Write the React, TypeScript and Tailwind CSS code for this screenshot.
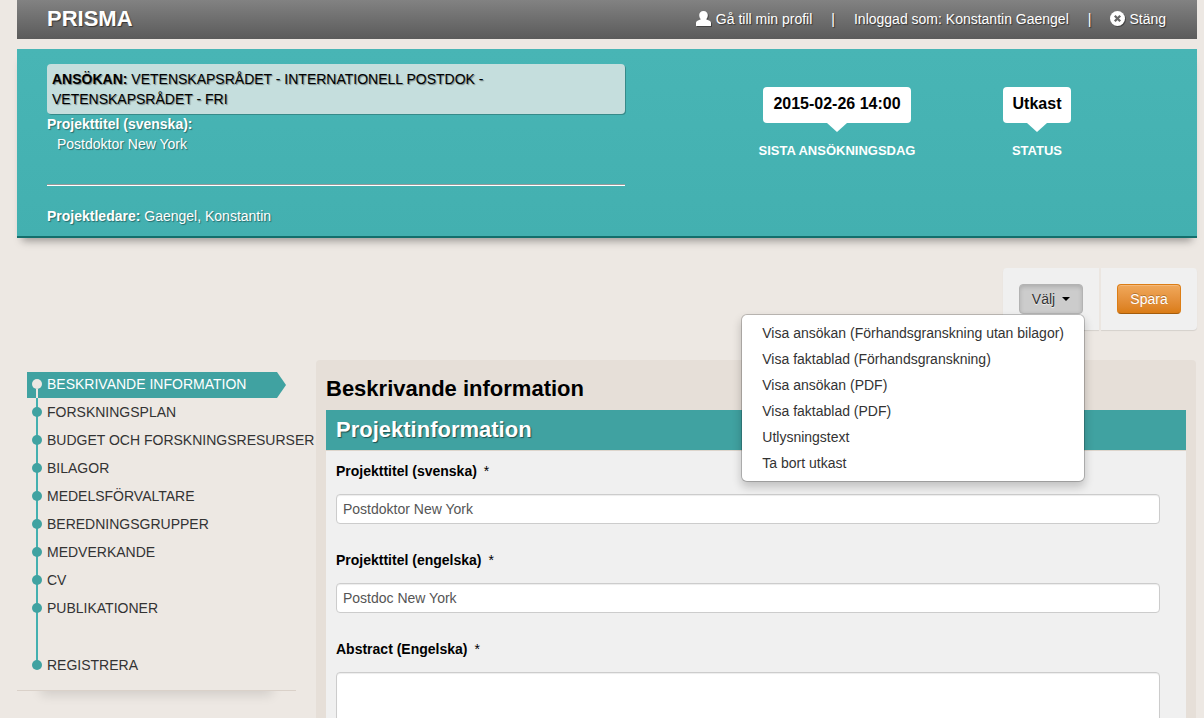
import React, { useState } from "react";

const steps = [
  "Forskningsplan",
  "Budget och forskningsresurser",
  "Bilagor",
  "Medelsförvaltare",
  "Beredningsgrupper",
  "Medverkande",
  "CV",
  "Publikationer",
];

const actions = [
  "Visa ansökan (Förhandsgranskning utan bilagor)",
  "Visa faktablad (Förhandsgranskning)",
  "Visa ansökan (PDF)",
  "Visa faktablad (PDF)",
  "Utlysningstext",
  "Ta bort utkast",
];

function UserIcon() {
  return (
    <svg viewBox="0 0 16 15" className="h-[15px] w-4 drop-shadow-[1px_1px_0_rgba(0,0,0,0.35)]" fill="#fff" aria-hidden="true">
      <path d="M7.500 0C4.900 0 3.200 1.700 3.200 4c0 1.900.7 3.400 1.700 4.300L2 9.600C.7 10.100 0 11 0 12.200V14.500q0 .5.500.5h14q.5 0 .5-.5v-2.300c0-1.200-.7-2.100-2-2.600l-2.900-1.300c1-.9 1.700-2.400 1.700-4.300 0-2.300-1.700-4-4.300-4z" />
    </svg>
  );
}

function CloseIcon() {
  return (
    <svg viewBox="0 0 15 15" className="size-[15px] drop-shadow-[1px_1px_0_rgba(0,0,0,0.35)]" aria-hidden="true">
      <circle cx="7.500" cy="7.500" r="7.500" fill="#fff" />
      <path d="M4.800 4.800l5.400 5.400M10.200 4.800l-5.400 5.400" stroke="#666" strokeWidth="2.300" />
    </svg>
  );
}

function TopBar() {
  return (
    <header className="flex h-[39px] items-center justify-between bg-linear-to-b from-[#828282] to-[#5b5b5b] pr-[31px] pl-[30px] text-white text-shadow-[1px_1px_1px_rgba(0,0,0,0.5)]">
      <h1 className="pb-[2px] text-[22px] leading-7 font-bold">PRISMA</h1>
      <nav className="flex items-center gap-[19px] pb-[2px]" aria-label="Konto">
        <a href="#profil" className="flex items-center gap-1">
          <UserIcon />
          Gå till min profil
        </a>
        <span>|</span>
        <span>Inloggad som: Konstantin Gaengel</span>
        <span>|</span>
        <a href="#stang" className="flex items-center gap-1">
          <CloseIcon />
          Stäng
        </a>
      </nav>
    </header>
  );
}

function Bubble({ value, label }: { value: string; label: string }) {
  return (
    <div className="flex w-[200px] flex-col items-center">
      <strong className="rounded-[4px] bg-white px-[10px] pt-[7px] pb-[9px] text-[16px] leading-5 text-black">
        {value}
      </strong>
      <svg viewBox="0 0 20 9" className="h-[9px] w-5" fill="#fff" aria-hidden="true">
        <path d="M0 0h20L10 9z" />
      </svg>
      <span className="mt-[9px] text-[13px] leading-5 font-bold whitespace-nowrap text-white uppercase">
        {label}
      </span>
    </div>
  );
}

function Summary() {
  return (
    <section className="mt-[10px] flex justify-between border-b-2 border-[#136f6c] bg-linear-to-b from-[#48b5b5] to-[#43b0b0] pt-[15px] pr-[60px] pb-[10px] pl-[30px] shadow-[0_8px_8px_-5px_rgba(0,0,0,0.35)]">
      <div className="w-[53%] text-white text-shadow-[1px_1px_1px_rgba(0,0,0,0.4)]">
        <p className="rounded-[4px] bg-[#c5dedd] p-[5px] text-black uppercase shadow-[1px_1px_0_#378a89]">
          <b>Ansökan:</b> Vetenskapsrådet - Internationell postdok -<br />
          Vetenskapsrådet - FRI
        </p>
        <p className="font-bold">Projekttitel (svenska):</p>
        <p className="pl-[10px]">Postdoktor New York</p>
        <hr className="mt-[30px] mb-5 border-t border-b border-t-[#999] border-b-white" />
        <p>
          <b>Projektledare:</b> Gaengel, Konstantin
        </p>
      </div>
      <div className="flex pt-[23px]">
        <Bubble value="2015-02-26 14:00" label="Sista ansökningsdag" />
        <Bubble value="Utkast" label="Status" />
      </div>
    </section>
  );
}

function Toolbar() {
  const [open, setOpen] = useState(true);
  return (
    <div className="mt-[30px] flex justify-end gap-[2px]">
      <div className="rounded-l-[4px] bg-[#f0f0f0] p-4 shadow-[0_1px_1px_rgba(0,0,0,0.1)]">
        <div className="relative">
          <button
            type="button"
            aria-expanded={open}
            onClick={() => setOpen(!open)}
            className="flex h-[30px] w-16 items-center justify-center gap-[7px] rounded-[4px] border border-[#b3b3b3] bg-[#cccccc] text-[#333] inset-shadow-[0_2px_4px_rgba(0,0,0,0.15)] text-shadow-[0_1px_1px_rgba(255,255,255,0.75)]"
          >
            Välj
            <svg viewBox="0 0 8 4" className="h-1 w-2" fill="#000" aria-hidden="true">
              <path d="M0 0h8L4 4z" />
            </svg>
          </button>
          {open && (
            <ul className="absolute top-full right-[-2px] z-10 rounded-[6px] border border-black/20 bg-white bg-clip-padding py-[5px] shadow-[0_5px_10px_rgba(0,0,0,0.2)]">
              {actions.map((a) => (
                <li key={a}>
                  <a href="#atgard" className="block px-5 py-[3px] whitespace-nowrap text-[#333]">
                    {a}
                  </a>
                </li>
              ))}
            </ul>
          )}
        </div>
      </div>
      <div className="rounded-r-[4px] bg-[#f0f0f0] p-4 shadow-[0_1px_1px_rgba(0,0,0,0.1)]">
        <button
          type="button"
          className="block h-[30px] w-16 rounded-[4px] border border-[#dc7d15] border-b-[#a45c0c] bg-linear-to-b from-[#f0a85a] to-[#da7c14] text-white inset-shadow-[0_1px_0_rgba(255,255,255,0.2)] text-shadow-[0_-1px_0_rgba(0,0,0,0.25)]"
        >
          Spara
        </button>
      </div>
    </div>
  );
}

function Step({ label, last = false }: { label: string; last?: boolean }) {
  return (
    <li className={last ? "mt-[29px] flex h-7 items-center" : "flex h-7 items-center"}>
      <span className="mx-[5px] size-[10px] shrink-0 rounded-full bg-[#40a2a1]" />
      <a href="#steg" className="whitespace-nowrap text-[#333] uppercase">
        {label}
      </a>
    </li>
  );
}

function Sidebar() {
  return (
    <nav className="w-[279px] shrink-0 pt-3" aria-label="Ansökans delar">
      <div className="relative pl-[10px]">
        <div className="absolute top-3 bottom-3 left-[19px] w-[2px] bg-[#43b0b0]" />
        <ul className="relative">
          <li className="mr-[10px] flex h-[26px] items-stretch">
            <a
              href="#steg"
              aria-current="step"
              className="flex grow items-center bg-[#40a2a1] whitespace-nowrap text-white uppercase"
            >
              <span className="flex w-5 flex-col items-center self-stretch pt-[7px]">
                <span className="size-[10px] rounded-full bg-[#ede8e3]" />
                <span className="w-[2px] grow bg-[#ede8e3]" />
              </span>
              <span className="pb-[2px]">Beskrivande information</span>
            </a>
            <svg viewBox="0 0 9 26" className="h-[26px] w-[9px]" fill="#40a2a1" aria-hidden="true">
              <path d="M0 0l9 13L0 26z" />
            </svg>
          </li>
          {steps.map((s) => (
            <Step key={s} label={s} />
          ))}
          <Step label="Registrera" last />
        </ul>
      </div>
      <div className="mt-[11px] h-4 overflow-hidden border-t border-[#dad1c9]">
        <div className="-mt-2 mx-7 h-2 shadow-[0_0_12px_4px_rgba(0,0,0,0.12)]" />
      </div>
    </nav>
  );
}

function Label({ id, children }: { id: string; children: React.ReactNode }) {
  return (
    <label htmlFor={id} className="block text-black">
      <b>{children}</b>
      <span className="pl-[7px]">*</span>
    </label>
  );
}

const field =
  "mt-[13px] block w-full rounded-[4px] border border-[#ccc] bg-white px-[6px] text-[#555] inset-shadow-[0_1px_1px_rgba(0,0,0,0.075)]";

function Content() {
  return (
    <main className="mr-px min-w-0 grow rounded-[4px] bg-[#e6dfd8] px-[10px] pt-[14px] pb-[10px]">
      <h2 className="pb-[6px] text-[22px] leading-[30px] font-bold text-black">Beskrivande information</h2>
      <section className="bg-[#f0f0f0]">
        <h3 className="border-b border-[#ddd5cc] bg-[#40a2a1] pl-[10px] text-[22px] leading-10 font-bold text-white text-shadow-[1px_1px_1px_rgba(0,0,0,0.5)]">
          Projektinformation
        </h3>
        <form className="flex flex-col gap-[26px] pt-[10px] pr-[26px] pb-5 pl-[10px]">
          <div>
            <Label id="titel-sv">Projekttitel (svenska)</Label>
            <input id="titel-sv" className={`${field} h-[30px]`} defaultValue="Postdoktor New York" />
          </div>
          <div>
            <Label id="titel-en">Projekttitel (engelska)</Label>
            <input id="titel-en" className={`${field} h-[30px]`} defaultValue="Postdoc New York" />
          </div>
          <div>
            <Label id="abstract">Abstract (Engelska)</Label>
            <textarea id="abstract" rows={8} className={`${field} resize-none py-1`} />
          </div>
        </form>
      </section>
    </main>
  );
}

export default function App() {
  return (
    <div className="min-h-screen bg-[#ede8e3] pr-[7px] pl-[17px] font-['Liberation_Sans',Arial,sans-serif] text-[14px] leading-5">
      <TopBar />
      <Summary />
      <Toolbar />
      <div className="mt-[30px] flex items-start gap-5">
        <Sidebar />
        <Content />
      </div>
    </div>
  );
}
